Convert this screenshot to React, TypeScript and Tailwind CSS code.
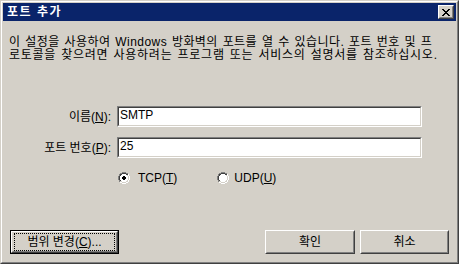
import React from "react"

const font = { fontFamily: '"Liberation Sans", "Noto Sans CJK KR", sans-serif' }

function Raised({ children, className = "" }: { children: React.ReactNode; className?: string }) {
  return (
    <div className={`border border-t-white border-l-white border-b-[#404040] border-r-[#404040] ${className}`}>
      <div className="h-full w-full border border-t-[#d4d0c8] border-l-[#d4d0c8] border-b-[#808080] border-r-[#808080] flex items-center justify-center">
        {children}
      </div>
    </div>
  )
}

function Sunken({ children, className = "" }: { children: React.ReactNode; className?: string }) {
  return (
    <div className={`border border-t-[#808080] border-l-[#808080] border-b-white border-r-white ${className}`}>
      <div className="h-full w-full border border-t-[#404040] border-l-[#404040] border-b-[#d4d0c8] border-r-[#d4d0c8] bg-white px-[1px] text-[12px] leading-[14px] text-black">
        {children}
      </div>
    </div>
  )
}

function Radio({ checked }: { checked?: boolean }) {
  return (
    <svg width="12" height="12" viewBox="0 0 12 12" shapeRendering="crispEdges">
      <path d="M4 0h4v1H4zM2 1h2v1H2zM8 1h2v1H8zM1 2h1v2H1zM0 4h1v4H0zM1 8h1v2H1z" fill="#808080" />
      <path d="M4 1h4v1H4zM2 2h2v1H2zM8 2h2v1H8zM2 3h1v1H2zM1 4h1v4H1zM2 8h1v1H2z" fill="#404040" />
      <path d="M10 2h1v2h-1zM11 4h1v4h-1zM10 8h1v2h-1zM8 10h2v1H8zM4 11h4v1H4zM2 10h2v1H2z" fill="#ffffff" />
      <path d="M9 3h1v1H9zM10 4h1v4h-1zM9 8h1v1H9zM8 9h1v1H8zM4 10h4v1H4zM3 9h1v1H3z" fill="#d4d0c8" />
      <path d="M4 2h4v1H4zM3 3h6v1H3zM2 4h8v4H2zM3 8h6v1H3zM4 9h4v1H4z" fill="#ffffff" />
      {checked && <path d="M5 4h2v1H5zM4 5h4v2H4zM5 7h2v1H5z" fill="#000000" />}
    </svg>
  )
}

export default function App() {
  return (
    <div className="w-[459px] h-[264px] bg-[#d4d0c8] text-black text-[12px]" style={font}>
      <div className="h-full border border-t-[#d4d0c8] border-l-[#d4d0c8] border-b-[#404040] border-r-[#404040]">
        <div className="h-full border border-t-white border-l-white border-b-[#808080] border-r-[#808080] p-[1px] flex flex-col">
          {/* title bar */}
          <div className="h-[18px] bg-[#0a246a] flex items-center pl-[4px] pr-[2px]">
            <span className="text-white font-bold text-[12px] leading-[14px] tracking-[1.5px]">포트 추가</span>
            <div className="ml-auto">
              <Raised className="w-[16px] h-[14px] bg-[#d4d0c8]">
                <svg width="8" height="7" viewBox="0 0 8 7" shapeRendering="crispEdges">
                  <path d="M0 0h2v1H0zM6 0h2v1H6zM1 1h2v1H1zM5 1h2v1H5zM2 2h4v1H2zM3 3h2v1H3zM2 4h4v1H2zM1 5h2v1H1zM5 5h2v1H5zM0 6h2v1H0zM6 6h2v1H6z" fill="#000" />
                </svg>
              </Raised>
            </div>
          </div>

          {/* description */}
          <div className="mt-[15px] ml-[6px] text-[12px] leading-[13px] whitespace-nowrap">
            <div className="tracking-[0.45px] [word-spacing:1px]">이 설정을 사용하여 Windows 방화벽의 포트를 열 수 있습니다. 포트 번호 및 프</div>
            <div className="tracking-[0.75px] [word-spacing:1px]">로토콜을 찾으려면 사용하려는 프로그램 또는 서비스의 설명서를 참조하십시오.</div>
          </div>

          {/* form */}
          <div className="mt-[44px] flex flex-col gap-[10px]">
            <div className="flex items-center">
              <span className="w-[108px] text-right">
                이름(<u>N</u>):
              </span>
              <Sunken className="ml-[6px] w-[305px] h-[21px]">SMTP</Sunken>
            </div>
            <div className="flex items-center">
              <span className="w-[108px] text-right">
                포트 번호(<u>P</u>):
              </span>
              <Sunken className="ml-[6px] w-[305px] h-[21px]">25</Sunken>
            </div>
          </div>

          <div className="mt-[13px] ml-[115px] flex items-center h-[14px]">
            <Radio checked />
            <span className="ml-[8px]">
              TCP(<u>T</u>)
            </span>
            <div className="ml-[40px]">
              <Radio />
            </div>
            <span className="ml-[5px]">
              UDP(<u>U</u>)
            </span>
          </div>

          {/* buttons */}
          <div className="mt-auto mb-[7px] flex items-end px-[7px]">
            <div className="border border-black w-[109px] h-[24px]">
              <Raised className="h-full bg-[#d4d0c8]">
                <span className="outline outline-1 outline-dotted outline-black w-[99px] h-[16px] flex items-center justify-center">
                  범위 변경(<u>C</u>)...
                </span>
              </Raised>
            </div>
            <Raised className="ml-auto w-[90px] h-[24px] bg-[#d4d0c8]">확인</Raised>
            <Raised className="ml-[5px] w-[89px] h-[24px] bg-[#d4d0c8]">취소</Raised>
          </div>
        </div>
      </div>
    </div>
  )
}
